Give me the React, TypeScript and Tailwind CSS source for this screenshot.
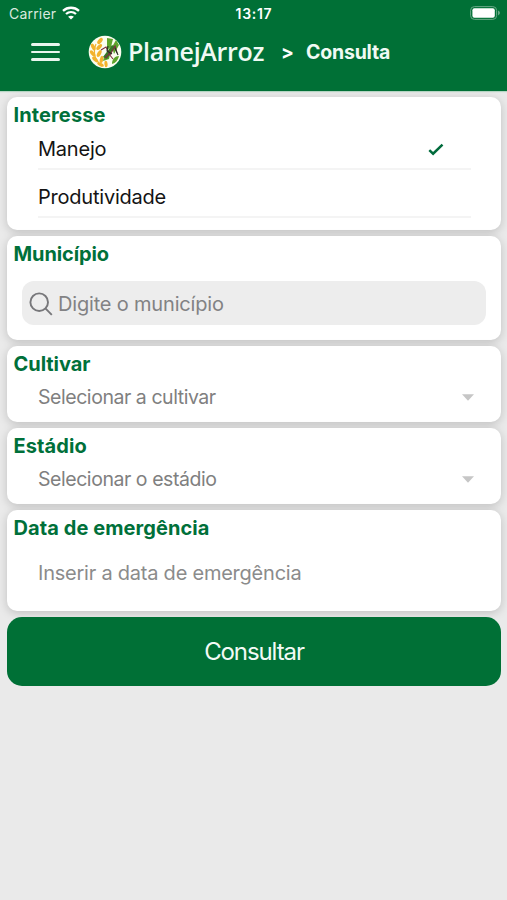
import React, { useState } from 'react';

interface CardProps {
  title: string;
  className: string;
  children: React.ReactNode;
}

function Card({ title, className, children }: CardProps) {
  return (
    <section className={`rounded-[10px] bg-white shadow-[0_2px_10px_rgba(0,0,0,0.18)] ${className}`}>
      <h2 className="pt-[5px] pl-[6.5px] text-[20px] leading-[26px] font-bold text-[#00703a]">
        {title}
      </h2>
      {children}
    </section>
  );
}

function Logo() {
  return (
    <svg className="h-[34px] w-[34px]" viewBox="0 0 34 34">
      <circle cx="17" cy="17" r="16.3" fill="#fbfdf0" />
      <path d="M14 31C8 26 4 19 8 9" fill="none" stroke="#f3b32d" strokeWidth="1.2" />
      <g fill="#f3b32d">
        <ellipse cx="12" cy="6" rx="1.9" ry="3.6" transform="rotate(40 12 6)" />
        <ellipse cx="5.2" cy="12" rx="1.8" ry="3.7" transform="rotate(-25 5.2 12)" />
        <ellipse cx="11.2" cy="12" rx="1.8" ry="3.7" transform="rotate(42 11.2 12)" />
        <ellipse cx="4.6" cy="18.5" rx="1.8" ry="3.7" transform="rotate(-38 4.6 18.5)" />
        <ellipse cx="11.2" cy="18.5" rx="1.8" ry="3.7" transform="rotate(30 11.2 18.5)" />
        <ellipse cx="7.2" cy="24.5" rx="1.8" ry="3.7" transform="rotate(-48 7.2 24.5)" />
        <ellipse cx="13.6" cy="24.5" rx="1.8" ry="3.7" transform="rotate(12 13.6 24.5)" />
        <ellipse cx="12.5" cy="29.5" rx="1.6" ry="3.6" transform="rotate(-62 12.5 29.5)" />
        <ellipse cx="18" cy="29" rx="1.6" ry="3.2" transform="rotate(-5 18 29)" />
      </g>
      <path d="M19 3l6 1-2 8-4 3zM24 12l4-7 3 5-5 9zM17 20l6-5-2 9-6 2zM24 29c0-5 3-8 7-8-1 4-3 7-7 8z" fill="#5da52b" />
      <path d="M15 22l9-12 3 2-8 12z" fill="#397826" />
      <path d="M13 15l5-3 4 8 5-9 2 7M17 23l4-4 4 5" fill="none" stroke="#7c3040" strokeWidth="1.1" />
      <path d="M20 11l-1 5 5 3M27 13l3 7" fill="none" stroke="#252f25" strokeWidth="1.1" />
    </svg>
  );
}

function StatusBar() {
  return (
    <div className="flex h-[27px] items-center justify-between pr-[6px] pl-[9px]">
      <div className="flex w-[120px] items-center gap-[6px]">
        <span className="text-[14px] leading-[18px] tracking-[0.2px] text-[#d9e9df]">Carrier</span>
        <svg className="-mt-px h-[14px] w-[18px]" viewBox="0 0 18 14" fill="none" stroke="white" strokeWidth="2.3">
          <path d="M1 4.8C5.5.7 12.5.7 17 4.8M4 8c2.9-2.6 7.1-2.6 10 0" />
          <path d="M9 13.6L6.1 10.7c1.7-1.4 4.1-1.4 5.8 0z" fill="white" stroke="none" />
        </svg>
      </div>
      <span className="mr-[2px] text-[14px] leading-[18px] font-semibold tracking-[0.7px] text-white">13:17</span>
      <div className="flex w-[120px] justify-end">
        <svg className="-mt-px h-[14px] w-[31px]" viewBox="0 0 31 14">
          <rect x=".6" y=".6" width="26" height="12.8" rx="3.8" fill="none" stroke="#67a886" />
          <rect x="2.4" y="2.3" width="22.4" height="9.4" rx="2" fill="white" />
          <path d="M28 4.6c2.6 1 2.6 3.8 0 4.8z" fill="#67a886" />
        </svg>
      </div>
    </div>
  );
}

function SelectRow({ label }: { label: string }) {
  return (
    <button className="flex h-[40px] w-full items-center justify-between pr-[27px] pl-[31px] text-[19.5px] tracking-[-0.45px] text-[#808080]">
      <span className="pt-[2px]">{label}</span>
      <svg className="h-[7px] w-[12px]" viewBox="0 0 12 7">
        <path d="M0 .3h12L6 6.7z" fill="#c6c6c6" />
      </svg>
    </button>
  );
}

const interesses = ['Manejo', 'Produtividade'];

function App() {
  const [interesse, setInteresse] = useState('Manejo');

  return (
    <div className="flex h-[900px] w-[507px] flex-col overflow-hidden bg-[#eaeaea] font-['Inter',sans-serif]">
      <header className="h-[91px] shrink-0 bg-[#007036] shadow-[0_1px_1px_#b6d6c4]">
        <StatusBar />
        <div className="flex h-[50px] items-center pl-[31px] text-white">
          <button className="flex w-[29px] flex-col gap-[5px]" aria-label="Menu">
            <span className="h-[2.4px] w-full rounded-full bg-[#e9f6ee]" />
            <span className="h-[2.4px] w-full rounded-full bg-[#e9f6ee]" />
            <span className="h-[2.4px] w-full rounded-full bg-[#e9f6ee]" />
          </button>
          <div className="-mt-px ml-[28px]">
            <Logo />
          </div>
          <span className="-mt-[2px] ml-[6px] w-[153px] font-['Open_Sans',sans-serif] text-[25px] leading-[34px] font-semibold tracking-[-0.3px] text-[#f0faf4]">
            PlanejArroz
          </span>
          <span className="w-[25px] pt-[2px] text-[19px] font-bold">&gt;</span>
          <span className="pt-[2px] text-[19.5px] font-bold tracking-[-0.2px] text-[#f0faf4]">Consulta</span>
        </div>
      </header>

      <main className="flex flex-col gap-[6px] pt-[6px] pr-[6px] pl-[7px]">
        <Card title="Interesse" className="h-[133px] tracking-[0.12px]">
          <ul className="mr-[30px] ml-[31px]">
            {interesses.map((item) => (
              <li key={item} className="h-[48px] border-b-2 border-[#f4f4f4] pt-[8px] first:h-[42px] first:pt-px">
                <button
                  className="flex h-full w-full items-center justify-between pr-[27px] text-[20px] tracking-[-0.22px] text-[#141414]"
                  onClick={() => setInteresse(item)}
                >
                  {item}
                  {interesse === item && (
                    <svg className="mt-[2px] h-[13px] w-[16px]" viewBox="0 0 16 13" fill="none" stroke="#006b3c" strokeWidth="2.5">
                      <path d="M1.3 7.2l3.8 3.5 9.4-9" />
                    </svg>
                  )}
                </button>
              </li>
            ))}
          </ul>
        </Card>

        <Card title="Município" className="h-[104px] tracking-[-0.1px]">
          <label className="mt-[14px] mr-[15px] ml-[15px] flex h-[44px] items-center gap-[5px] rounded-[12px] bg-[#ededed] pl-[7px]">
            <svg className="mt-px h-[24px] w-[24px] shrink-0" viewBox="0 0 24 24" fill="none" stroke="#77777a" strokeWidth="1.9">
              <circle cx="10.2" cy="10.2" r="8.8" />
              <path d="M16.4 16.4l6.4 6.4" />
            </svg>
            <input
              className="min-w-0 flex-1 bg-transparent pt-[2px] text-[20px] tracking-[-0.18px] outline-none placeholder:text-[#828284]"
              placeholder="Digite o município"
            />
          </label>
        </Card>

        <Card title="Cultivar" className="h-[76px] tracking-[-0.05px]">
          <SelectRow label="Selecionar a cultivar" />
        </Card>

        <Card title="Estádio" className="h-[76px] tracking-[0.08px]">
          <SelectRow label="Selecionar o estádio" />
        </Card>

        <Card title="Data de emergência" className="h-[101px] tracking-[0.08px]">
          <button className="mt-[12px] flex h-[40px] items-center pl-[31px] text-[20px] tracking-[-0.23px] text-[#8b8b8b]">
            Inserir a data de emergência
          </button>
        </Card>

        <button className="h-[69px] rounded-[15px] bg-[#007036] text-[24px] tracking-[-1.1px] text-[#f2faf5]">
          Consultar
        </button>
      </main>
    </div>
  );
}

export default App;
